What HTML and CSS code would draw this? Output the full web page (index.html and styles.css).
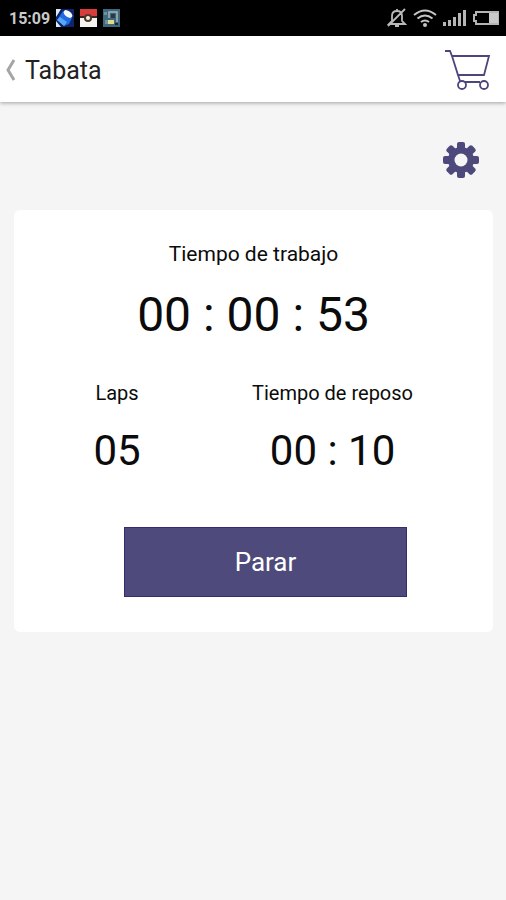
FILE: index.html
```html
<!DOCTYPE html>
<html lang="es">
<head>
    <meta charset="UTF-8">
    <meta name="viewport" content="width=device-width, initial-scale=1.0">
    <title>Tabata</title>
    <link rel="stylesheet" href="styles.css">
</head>
<body>

<div class="status-bar">
    <div class="status-left">
        <span class="clock">15:09</span>
        <svg width="18" height="18" viewBox="0 0 18 18" aria-hidden="true">
            <rect width="18" height="18" fill="#10246b"/>
            <path d="M0 0h5L2 5 0 8zM0 12l5 6H0z" fill="#dce7f7"/>
            <path d="M7 2l9 7-3 6-5 2-7-6z" fill="#216be0"/>
            <path d="M4 8l7 5-3 4-7-6z" fill="#59a7f5"/>
            <ellipse cx="12" cy="5" rx="5" ry="3" transform="rotate(38 12 5)" fill="#f4f8ff"/>
        </svg>
        <svg width="17" height="18" viewBox="0 0 17 18" aria-hidden="true">
            <rect width="17" height="18" fill="#f4f3ef"/>
            <rect width="17" height="7" fill="#d93c3b"/>
            <path d="M0 8h17" stroke="#3c2525" stroke-width="2"/>
            <circle cx="8" cy="9" r="4" fill="#4c3a2c"/>
            <circle cx="8" cy="9" r="2" fill="#f5f3df"/>
        </svg>
        <svg width="17" height="18" viewBox="0 0 17 18" aria-hidden="true">
            <rect width="17" height="18" fill="#41677c"/>
            <path d="M1 3h3v3H1zM2 11h3v4H2z" fill="#6991a0"/>
            <path d="M6 9V3h8v10" fill="none" stroke="#a5b5b8" stroke-width="1.500"/>
            <path d="M8 5h4v4H8z" fill="#263a47"/>
            <rect x="5" y="11" width="6" height="4" fill="#e3d98b"/>
            <path d="M12 15h3" stroke="#182936" stroke-width="2"/>
        </svg>
    </div>
    <div class="status-right">
        <svg width="20" height="20" viewBox="0 0 20 20" fill="none" stroke="#b9b9b9" stroke-width="1.800" aria-hidden="true">
            <path d="M2 16h16l-3-3V8c0-3-2-5-5-5S5 5 5 8v5zM8 18h4M10 1v2M1 18L18 1"/>
        </svg>
        <svg width="24" height="20" viewBox="0 0 24 20" fill="none" stroke="#c6c6c6" stroke-width="2" aria-hidden="true">
            <path d="M1 7q11-9 22 0M4.500 10.500q7.500-6 15 0M8 14q4-3 8 0"/>
            <circle cx="12" cy="17" r="2" fill="#c6c6c6" stroke="none"/>
        </svg>
        <svg width="23" height="20" viewBox="0 0 23 20" fill="#b5b5b5" aria-hidden="true">
            <path d="M0 14h3v4H0zM5 12h3v6H5zM10 9h3v9h-3zM15 5h3v13h-3zM20 2h3v16h-3z"/>
        </svg>
        <svg width="28" height="20" viewBox="0 0 28 20" aria-hidden="true">
            <path d="M4 4h22v12H4v-3H2V7h2z" fill="none" stroke="#b4b4b4" stroke-width="2"/>
            <rect x="17" y="5" width="9" height="10" fill="#c9c9c9"/>
        </svg>
    </div>
</div>

<header class="header">
    <a class="back" href="#">
        <svg width="10" height="22" viewBox="0 0 10 22" fill="none" stroke="#a5a5a5" stroke-width="3" aria-hidden="true">
            <path d="M9 1L3 11l6 10"/>
        </svg>
        <span>Tabata</span>
    </a>
    <button class="icon-button" aria-label="Carrito">
        <svg width="46" height="42" viewBox="0 0 46 42" fill="none" stroke="#4b467d" stroke-width="1.800" aria-hidden="true">
            <path d="M0 2h5l2 5h37l-5 19H13L7 7M13 26l2 6M20 33h15"/>
            <circle cx="17" cy="36" r="4"/>
            <circle cx="39" cy="36" r="4"/>
        </svg>
    </button>
</header>

<main>
    <div class="toolbar">
        <button class="icon-button" aria-label="Ajustes">
            <svg width="36" height="36" viewBox="-18 -18 36 36" fill="#4d497c" aria-hidden="true">
                <rect x="-4" y="-18" width="8" height="36" rx="2"/>
                <rect x="-4" y="-18" width="8" height="36" rx="2" transform="rotate(45)"/>
                <rect x="-4" y="-18" width="8" height="36" rx="2" transform="rotate(90)"/>
                <rect x="-4" y="-18" width="8" height="36" rx="2" transform="rotate(135)"/>
                <circle r="13"/>
                <circle r="6.500" fill="#f5f5f5"/>
            </svg>
        </button>
    </div>

    <section class="card">
        <div class="work">
            <h2>Tiempo de trabajo</h2>
            <p class="time">00 : 00 : 53</p>
        </div>
        <div class="details">
            <div>
                <h3>Laps</h3>
                <p class="time-small">05</p>
            </div>
            <div>
                <h3>Tiempo de reposo</h3>
                <p class="time-small">00 : 10</p>
            </div>
        </div>
        <button class="stop">Parar</button>
    </section>
</main>

</body>
</html>
```

FILE: styles.css
```css
* {
    box-sizing: border-box;
}

body {
    margin: 0;
    font-family: Roboto, "Noto Sans", sans-serif;
    background-color: #f5f5f5;
    color: #0b0b0b;
}

h2, h3, p {
    margin: 0;
    font-weight: normal;
}

svg {
    display: block;
}

.status-bar {
    display: flex;
    justify-content: space-between;
    align-items: center;
    height: 36px;
    padding: 0 6px 0 9px;
    background-color: #000;
}

.status-left, .status-right {
    display: flex;
    align-items: center;
    gap: 6px;
}

.clock {
    color: #c9c9c9;
    font-size: 16px;
    font-weight: bold;
}

.header {
    display: flex;
    justify-content: space-between;
    align-items: center;
    height: 66px;
    padding: 2px 15px 0 5px;
    background-color: #fff;
    box-shadow: 0 1px 4px rgba(0, 0, 0, 0.35);
}

.back {
    display: flex;
    align-items: center;
    gap: 10px;
    color: #222;
    font-size: 25px;
    text-decoration: none;
}

.icon-button {
    padding: 0;
    border: none;
    background: none;
    cursor: pointer;
}

.toolbar {
    display: flex;
    justify-content: flex-end;
    padding: 40px 27px 32px;
}

.card {
    margin: 0 13px 0 14px;
    padding: 29px 0 35px;
    border-radius: 6px;
    background-color: #fff;
    text-align: center;
}

h2 {
    font-size: 21px;
    line-height: 30px;
}

.time {
    padding-top: 18px;
    font-size: 48px;
    line-height: 56px;
}

.details {
    display: grid;
    grid-template-columns: 43% 47%;
    padding-top: 35px;
}

h3 {
    font-size: 20px;
    line-height: 30px;
}

.time-small {
    padding-top: 15px;
    font-size: 42px;
    line-height: 56px;
}

.stop {
    display: block;
    width: 59%;
    height: 70px;
    margin: 48px 0 0 23%;
    border: 1px solid #332c70;
    background-color: #4e4a7b;
    color: #fff;
    font-family: inherit;
    font-size: 26px;
    cursor: pointer;
}
```
